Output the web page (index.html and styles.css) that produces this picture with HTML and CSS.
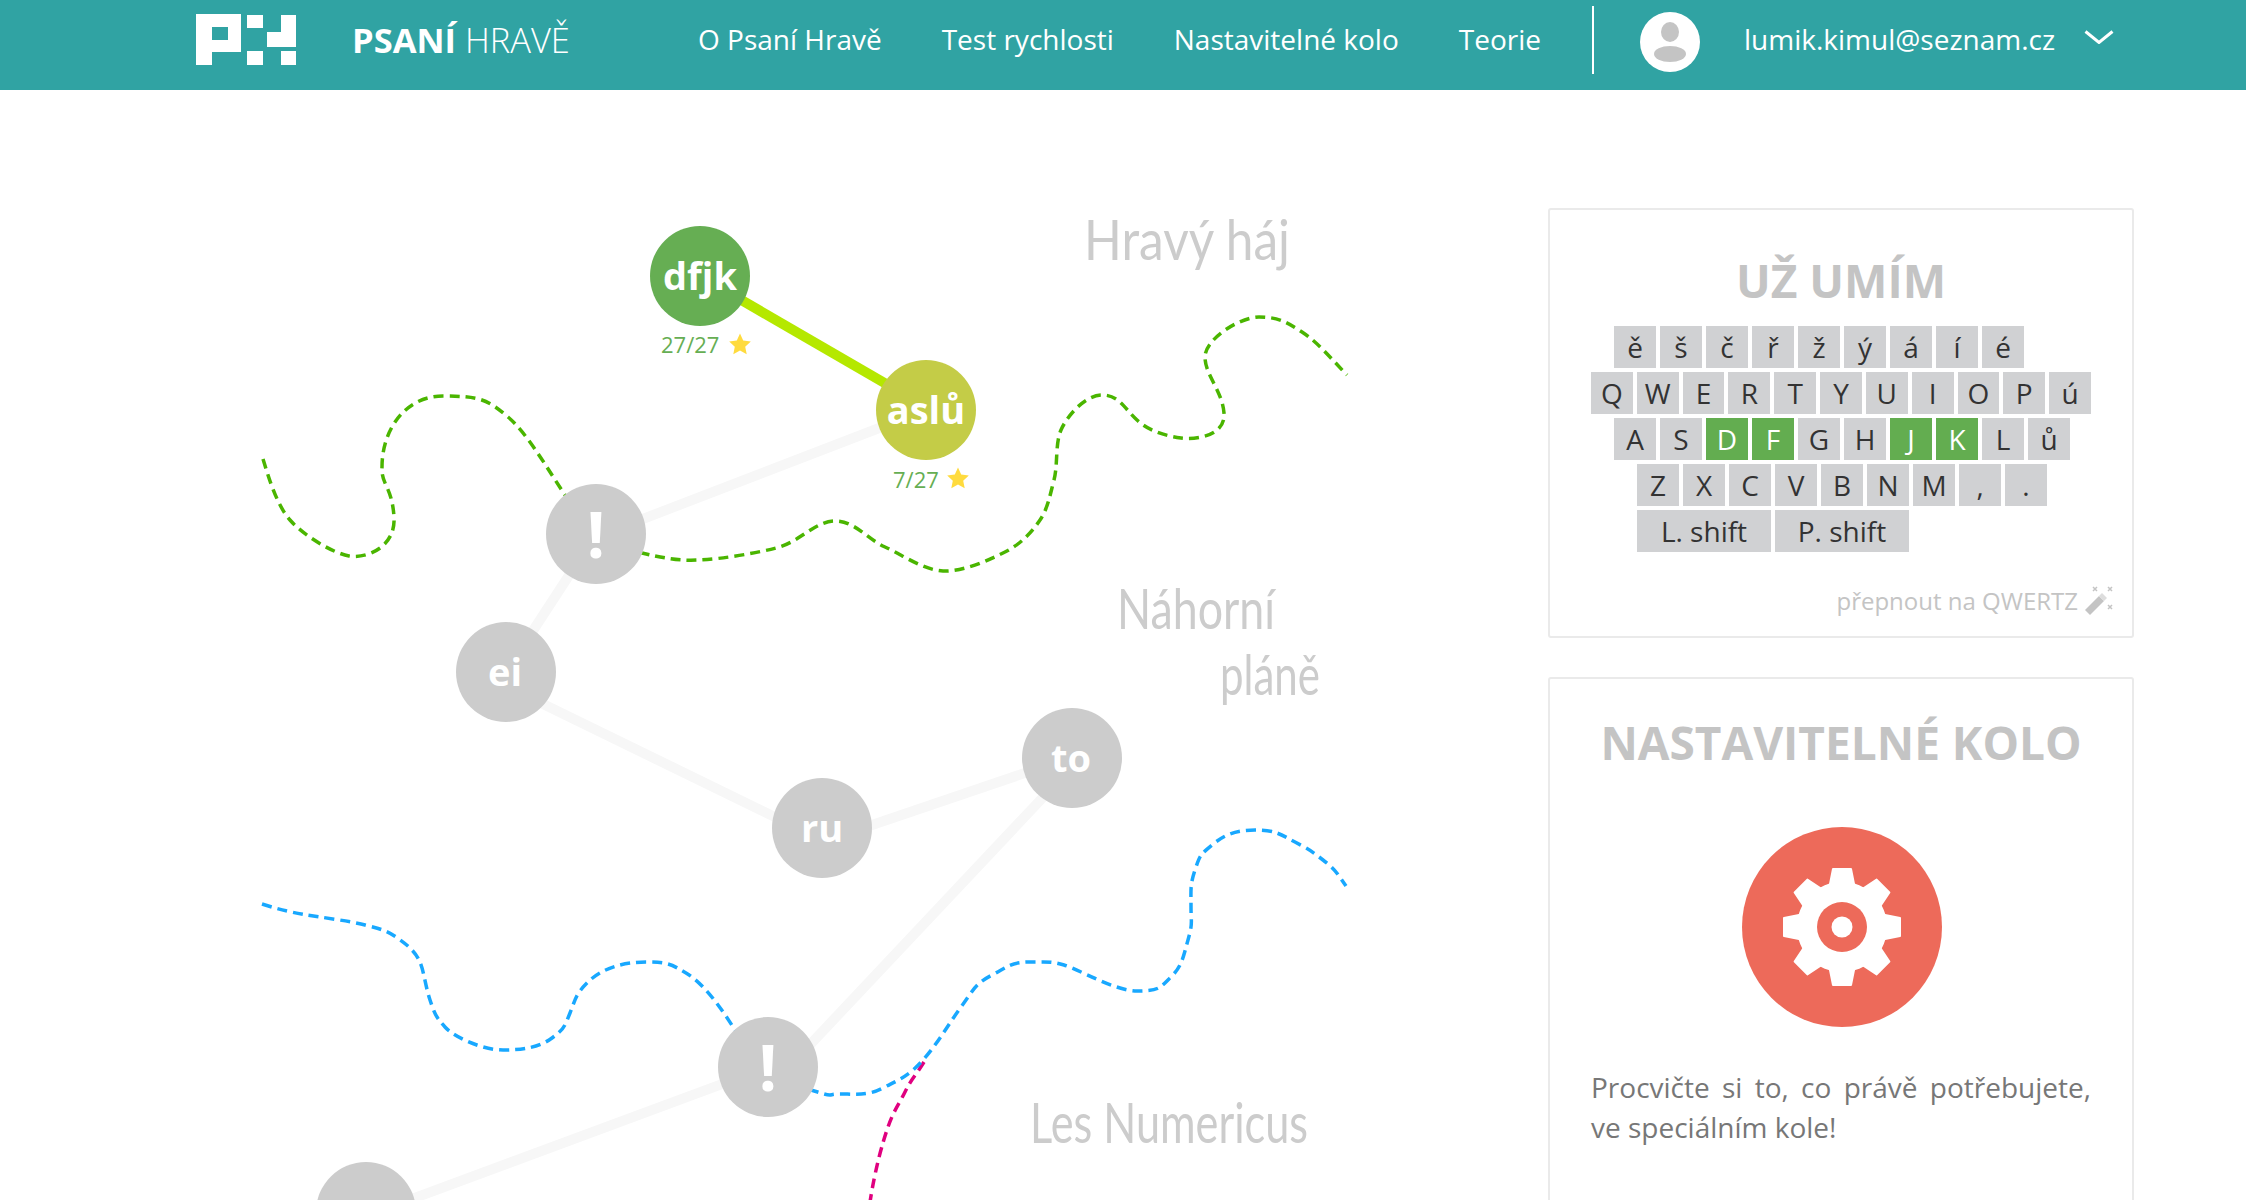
FILE: index.html
```html
<!DOCTYPE html>
<html lang="cs">
<head>
<meta charset="utf-8">
<title>Psaní Hravě</title>
<link rel="stylesheet" href="styles.css">
</head>
<body>
<header class="topbar">
  <svg class="logo" viewBox="0 0 100 51" aria-hidden="true">
    <path class="logo-mark" fill-rule="evenodd" d="M0 0H45V38H16V51H0ZM16 13V26H32V13Z"/>
    <rect class="logo-mark" x="51" y="1" width="16" height="13"/>
    <rect class="logo-mark" x="51" y="37" width="16" height="14"/>
    <path class="logo-mark" d="M85 1H100V33H71V18H85Z"/>
    <rect class="logo-mark" x="85" y="37" width="15" height="14"/>
  </svg>
  <a class="brand"><b>PSANÍ</b> HRAVĚ</a>
  <nav class="nav">
    <a>O Psaní Hravě</a>
    <a>Test rychlosti</a>
    <a>Nastavitelné kolo</a>
    <a>Teorie</a>
  </nav>
  <span class="divider"></span>
  <svg class="avatar" viewBox="0 0 60 60" aria-hidden="true">
    <circle cx="30" cy="30" r="30" fill="#fff"/>
    <ellipse cx="30" cy="20" rx="9" ry="10" fill="#c4c4c4"/>
    <ellipse cx="30" cy="42" rx="16" ry="8" fill="#c4c4c4"/>
  </svg>
  <span class="email">lumik.kimul@seznam.cz</span>
  <svg class="chevron" viewBox="0 0 30 14" aria-hidden="true"><path d="M1.5 1.5 15 12.5 28.500 1.500"/></svg>
</header>

<main class="page">
  <section class="map">
    <svg class="map-canvas" viewBox="0 90 1540 1110" width="1540" height="1110">
      <g class="link">
        <line x1="926" y1="410" x2="596" y2="537"/>
        <line x1="596" y1="534" x2="506" y2="672"/>
        <line x1="506" y1="686" x2="822" y2="840"/>
        <line x1="822" y1="842" x2="1072" y2="757"/>
        <line x1="1080" y1="758" x2="789" y2="1067"/>
        <line x1="768" y1="1067" x2="366" y2="1216"/>
      </g>
      <line class="link-done" x1="700" y1="276" x2="926" y2="407"/>

      <path class="border border-green" d="M263 459C268 475 276 504 290 520S333 553 349 556S396 548 394 517S381 485 382 467C382 430 405 396 443 396S488 400 508 417S550 473 565 495S620 548 642 553S677 561 699 560S752 554 776 548S815 521 835 521S867 539 885 547S923 570 943 571S989 560 1005 552S1032 532 1040 520S1050 495 1054 480S1055 444 1061 430S1085 395 1102 395S1124 408 1137 420S1167 436 1181 438S1226 436 1224 413S1205 375 1205 357S1240 317 1259 317S1287 322 1302 332S1325 352 1347 375"/>
      <path class="border border-pink" d="M924 1062C914 1078 912 1078 905 1092S894 1110 888 1127S875 1170 870 1202"/>
      <path class="border border-blue" d="M262 904C280 910 295 913 307 915S350 921 365 925S386 930 396 937S414 950 419 960S425 985 430 1000S436 1017 445 1027S482 1050 503 1050S540 1047 552 1038S564 1028 570 1013S575 995 588 982S622 962 646 962S672 965 686 973S716 1000 733 1027S785 1082 811 1090S825 1094 840 1094S868 1096 883 1088S908 1077 923 1060S948 1025 961 1007S975 984 992 975S1012 962 1030 962S1050 961 1064 965S1115 991 1137 991S1160 988 1171 977S1183 958 1188 940S1191 925 1191 907S1190 885 1195 870S1200 855 1212 845S1235 830 1255 830S1280 834 1295 842S1310 850 1323 860S1336 872 1346 886"/>

      <g class="node node-done">
        <circle cx="700" cy="276" r="50"/>
        <text x="700" y="290">dfjk</text>
      </g>
      <g class="node node-progress">
        <circle cx="926" cy="410" r="50"/>
        <text x="926" y="424">aslů</text>
      </g>
      <g class="node">
        <circle cx="596" cy="534" r="50"/>
        <text x="596" y="558" class="node-mark">!</text>
      </g>
      <g class="node">
        <circle cx="506" cy="672" r="50"/>
        <text x="505" y="686">ei</text>
      </g>
      <g class="node">
        <circle cx="822" cy="828" r="50"/>
        <text x="822" y="842">ru</text>
      </g>
      <g class="node">
        <circle cx="1072" cy="758" r="50"/>
        <text x="1071" y="772">to</text>
      </g>
      <g class="node">
        <circle cx="768" cy="1067" r="50"/>
        <text x="768" y="1091" class="node-mark">!</text>
      </g>
      <g class="node">
        <circle cx="366" cy="1212" r="50"/>
      </g>

      <text class="score" x="661" y="353">27/27</text>
      <path class="star" d="M740 333.500 743.200 340.600 750.800 341.500 745.200 346.700 746.700 354.300 740 350.500 733.300 354.300 734.800 346.700 729.200 341.500 736.800 340.600Z"/>
      <text class="score" x="893" y="488">7/27</text>
      <path class="star" d="M958 467.500 961.200 474.600 968.800 475.500 963.200 480.700 964.700 488.300 958 484.500 951.300 488.300 952.800 480.700 947.200 475.500 954.800 474.600Z"/>

      <text class="region" x="1084" y="260" textLength="206" lengthAdjust="spacingAndGlyphs">Hravý háj</text>
      <text class="region" x="1117" y="629" textLength="158" lengthAdjust="spacingAndGlyphs">Náhorní</text>
      <text class="region" x="1220" y="695" textLength="100" lengthAdjust="spacingAndGlyphs">pláně</text>
      <text class="region" x="1030" y="1143" textLength="278" lengthAdjust="spacingAndGlyphs">Les Numericus</text>
    </svg>
  </section>

  <aside class="side">
    <section class="card card-keys">
      <h2 class="card-title">UŽ UMÍM</h2>
      <div class="keyboard">
        <div class="key-row row-a">
          <span class="key">ě</span><span class="key">š</span><span class="key">č</span><span class="key">ř</span><span class="key">ž</span><span class="key">ý</span><span class="key">á</span><span class="key">í</span><span class="key">é</span>
        </div>
        <div class="key-row">
          <span class="key">Q</span><span class="key">W</span><span class="key">E</span><span class="key">R</span><span class="key">T</span><span class="key">Y</span><span class="key">U</span><span class="key">I</span><span class="key">O</span><span class="key">P</span><span class="key">ú</span>
        </div>
        <div class="key-row row-a">
          <span class="key">A</span><span class="key">S</span><span class="key key-on">D</span><span class="key key-on">F</span><span class="key">G</span><span class="key">H</span><span class="key key-on">J</span><span class="key key-on">K</span><span class="key">L</span><span class="key">ů</span>
        </div>
        <div class="key-row row-b">
          <span class="key">Z</span><span class="key">X</span><span class="key">C</span><span class="key">V</span><span class="key">B</span><span class="key">N</span><span class="key">M</span><span class="key">,</span><span class="key">.</span>
        </div>
        <div class="key-row row-b">
          <span class="key key-wide">L. shift</span><span class="key key-wide">P. shift</span>
        </div>
      </div>
      <div class="switch">
        <span>přepnout na QWERTZ</span>
        <svg class="wand" viewBox="0 0 30 30" aria-hidden="true">
          <path class="wand-stick" d="M1 24 15 10 20 15 6 29Z"/>
          <path class="wand-tip" d="M15 10 18 7 23 12 20 15Z"/>
          <path class="wand-spark" d="M9 1 13 5M13 1 9 5M24 1 28 5M28 1 24 5M24 19 28 23M28 19 24 23"/>
        </svg>
      </div>
    </section>

    <section class="card card-custom">
      <h2 class="card-title">NASTAVITELNÉ KOLO</h2>
      <svg class="gear" viewBox="0 0 200 200" aria-hidden="true">
        <circle cx="100" cy="100" r="100" fill="#ed6a5a"/>
        <g class="gear-body">
          <circle cx="100" cy="100" r="44"/>
          <polygon id="tooth" points="91,42 109,42 113,62 87,62"/>
          <use href="#tooth" transform="rotate(45 100 100)"/>
          <use href="#tooth" transform="rotate(90 100 100)"/>
          <use href="#tooth" transform="rotate(135 100 100)"/>
          <use href="#tooth" transform="rotate(180 100 100)"/>
          <use href="#tooth" transform="rotate(225 100 100)"/>
          <use href="#tooth" transform="rotate(270 100 100)"/>
          <use href="#tooth" transform="rotate(315 100 100)"/>
        </g>
        <circle cx="100" cy="100" r="25" fill="#ed6a5a"/>
        <circle cx="100" cy="100" r="10.500" fill="#fff"/>
      </svg>
      <p class="card-text">Procvičte si to, co právě potřebujete, ve speciálním kole!</p>
    </section>
  </aside>
</main>
</body>
</html>
```
FILE: styles.css
```css
* { box-sizing: border-box; }
html, body { margin: 0; height: 1200px; overflow: hidden; background: #fff; }
body { font-family: "Open Sans", "Noto Sans", sans-serif; color: #333; }

.topbar {
  display: flex;
  align-items: center;
  height: 90px;
  padding-left: 196px;
  padding-bottom: 12px;
  background: #30a3a3;
  color: #fff;
}
.logo { width: 100px; height: 51px; margin-right: 56px; flex: none; margin-top: 1px; }
.logo-mark { fill: #fff; }
.brand { width: 346px; font-size: 34.500px; font-weight: 300; white-space: nowrap; }
.brand b { font-weight: 700; }
.nav { display: flex; gap: 60px; font-size: 28px; white-space: nowrap; }
.divider { width: 2px; height: 68px; margin-left: 51px; margin-top: 2px; background: #fff; }
.avatar { width: 60px; height: 60px; margin-left: 46px; margin-top: 6px; flex: none; }
.email { margin-left: 44px; font-size: 28px; white-space: nowrap; }
.chevron { width: 30px; height: 14px; margin-left: 29px; margin-top: -4px; flex: none; }
.chevron path { fill: none; stroke: #fff; stroke-width: 3; }

.page { display: flex; height: 1110px; }
.map { width: 1548px; flex: none; }
.map-canvas { display: block; }
.link line { stroke: #f7f7f7; stroke-width: 10; }
.link-done { stroke: #b5e800; stroke-width: 10; }
.border { fill: none; stroke-width: 3.500; stroke-dasharray: 10 6; }
.border-green { stroke: #4ab500; }
.border-blue { stroke: #18a8ff; }
.border-pink { stroke: #e0007f; }
.node circle { fill: #ccc; }
.node text { fill: #fff; font-size: 38px; font-weight: 700; text-anchor: middle; }
.node .node-mark { font-size: 64px; }
.node-done circle { fill: #66ae53; }
.node-progress circle { fill: #c4cc47; }
.score { fill: #66ae53; font-size: 22px; }
.star { fill: #ffdb3e; }
.region { fill: #ccc; font-family: "Lato", sans-serif; font-size: 56px; font-weight: 400; }

.side { width: 586px; padding-top: 118px; }
.card { border: 2px solid #eaeaea; border-radius: 3px; padding: 0 41px; }
.card-keys { height: 430px; padding-top: 40px; }
.card-custom { height: 600px; margin-top: 39px; padding-top: 33px; }
.card-title { margin: 0; font-size: 46px; line-height: 60px; font-weight: 700; color: #c4c4c4; text-align: center; white-space: nowrap; }
.keyboard { display: flex; flex-direction: column; gap: 4px; margin-top: 16px; }
.key-row { display: flex; gap: 4px; }
.row-a { padding-left: 23px; }
.row-b { padding-left: 46px; }
.key { display: flex; align-items: center; justify-content: center; width: 42px; height: 42px; background: #d0d1d3; font-size: 28px; color: #333; white-space: nowrap; }
.key-on { background: #63ad50; color: #fff; }
.key-wide { width: 134px; }
.switch { display: flex; justify-content: flex-end; align-items: center; gap: 6px; margin-top: 32px; margin-right: -23px; font-size: 24px; color: #c4c4c4; }
.wand { width: 30px; height: 30px; flex: none; }
.wand-stick { fill: #c4c4c4; }
.wand-tip { fill: #ddd; }
.wand-spark { fill: none; stroke: #c4c4c4; stroke-width: 1.500; }
.gear { display: block; width: 200px; height: 200px; margin: 55px 0 0 151px; }
.gear-body { fill: #fff; stroke: #fff; stroke-width: 2; stroke-linejoin: round; }
.card-text { margin: 40px 0 0; font-size: 28px; line-height: 40px; color: #777; text-align: justify; }
```
